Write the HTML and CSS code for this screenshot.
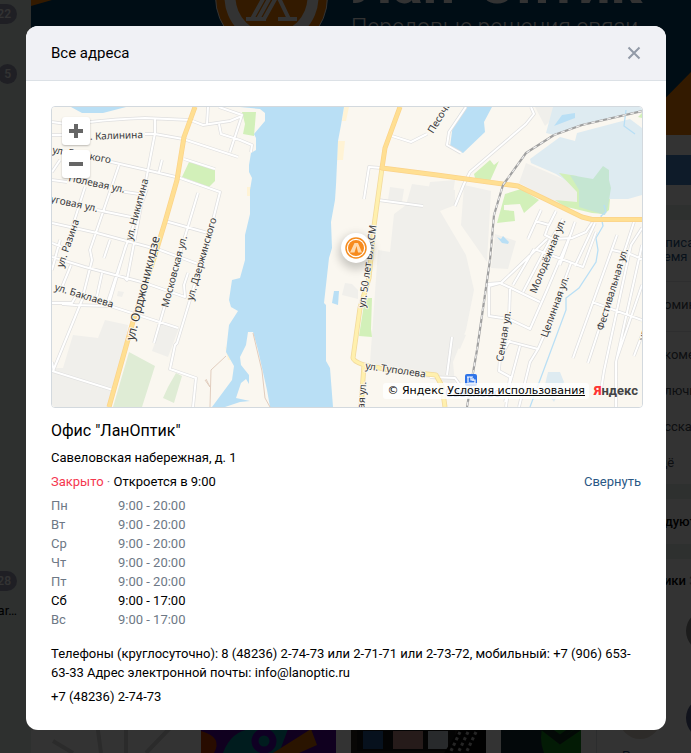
FILE: index.html
```html
<!DOCTYPE html>
<html lang="ru">
<head>
<meta charset="utf-8">
<meta name="viewport" content="width=device-width, initial-scale=1">
<title>Все адреса</title>
<link rel="stylesheet" href="styles.css">
</head>
<body>
<div class="page" aria-hidden="true">
  <nav class="rail">
    <span class="badge">22</span>
    <span class="badge badge-next">5</span>
    <span class="badge badge-low">28</span>
    <span class="rail-name">ar…</span>
  </nav>
  <div class="main">
    <svg class="cover" viewBox="31 0 660 135" preserveAspectRatio="xMinYMin slice">
      <rect x="31" width="660" height="135" fill="#00406a"/>
      <path d="M31 0H52L31 6Z" fill="#ff8200"/>
      <path d="M691 72V135H629Z" fill="#ff8200"/>
      <circle cx="271.5" cy="-3" r="56" fill="#ff8200" stroke="#fff"/>
      <circle cx="271.5" cy="-3" r="47" fill="#fff"/>
      <circle cx="271.5" cy="-3" r="36" fill="#ff8200"/>
      <path d="M246 19H266M252 19L268-10M258 19L274-10M264 19L278-6M276-8L289 19M278 19H297" fill="none" stroke="#fff" stroke-width="4"/>
      <text class="cover-name" x="352" y="3">Лан-Оптик</text>
      <text class="cover-line" x="351" y="35">Передовые решения связи</text>
    </svg>
    <div class="columns">
      <div class="wall">
        <div class="goods">
          <svg viewBox="0 0 135 120"><rect width="135" height="120" fill="#fff"/><path d="M2 108L22 120M46 90L50 120M75 90V120M120 94L95 120" stroke="#d5d5d5" stroke-width="4"/></svg>
          <svg viewBox="0 0 135 120"><rect width="135" height="120" fill="#50009b"/><path d="M0 98Q22 104 13 120H0Z" fill="#c83c00"/><path d="M22 120Q30 98 50 96H87L78 120Z" fill="#008c96"/><circle cx="63" cy="108" r="9" fill="none" stroke="#4c00b0" stroke-width="7"/><path d="M72 120L110 96L116 112L98 120Z" fill="#d26400"/></svg>
          <svg viewBox="0 0 135 120"><rect width="135" height="120" fill="#292321"/><path d="M6 90H104V118H6Z" fill="#151515"/><path d="M12 98H32V116H12Z" fill="#235491"/><path d="M42 98H72V116H42Z" fill="#bd8580"/><path d="M77 98H97V116H77Z" fill="#c8d2dc"/><path d="M93 120L108 96H135V120Z" fill="#090909"/><path d="M109 99L99 120M117 99L107 120M125 99L115 120" stroke="#bbb" stroke-width="3" stroke-dasharray="3 3"/></svg>
          <svg class="short" viewBox="0 0 80 120"><rect width="80" height="120" fill="#132b33"/><circle cx="78" cy="105" r="38" fill="#13891a"/><path d="M42 96L59 109L78 96M38 89L59 104L80 89" fill="none" stroke="#102d22" stroke-width="4"/></svg>
        </div>
      </div>
      <aside class="side">
        <div class="card card-follow"><div class="follow"></div></div>
        <div class="card card-actions">
          <p class="action write">Написать<br>время о</p>
          <p class="action ruled">Упоминания</p>
          <p class="action ruled">Рекомендовать</p>
          <p class="action">Включить</p>
          <p class="action">Рассказать</p>
          <p class="action">Ещё</p>
        </div>
        <div class="card card-head">Рекомендуют</div>
        <div class="card card-people">
          <div class="people-title">Подписчики <span>3</span></div>
          <div class="faces"><i></i><i></i></div>
          <div class="faces"><i class="face-light"></i><i class="face-blue"></i></div>
          <div class="person">Роман</div>
        </div>
      </aside>
    </div>
  </div>
</div>

<div class="overlay">
  <section class="dialog" role="dialog" aria-labelledby="dialog-title">
    <header class="dialog-head">
      <h1 id="dialog-title">Все адреса</h1>
      <button class="close" type="button" aria-label="Закрыть">
        <svg viewBox="0 0 14 14"><path d="M1.5 1.5L12.5 12.5M12.5 1.5L1.5 12.5" fill="none" stroke="#929aa7" stroke-width="2"/></svg>
      </button>
    </header>
    <div class="dialog-body">
      <div class="map">
        <svg class="map-view" viewBox="52 107 590 300" preserveAspectRatio="xMidYMid slice">
          <defs>
            <filter id="soft" x="-50%" y="-50%" width="200%" height="200%"><feGaussianBlur stdDeviation="5"/></filter>
            <g id="streets">
              <path d="M52 122L66 124M90 122Q115 119 145 118L190 120L203 125L230 121L242 116M208 107L207 124M219 107L242 115L230 152M219 124L221 134L240 140L252 145L251 152M52 135H62M155 118V133L127 280L125 278M145 134H155L183 139L238 157M107 161L155 172L180 178L220 192L208 240L177 343L175 345L170 369L196 378L193 407M162 160L159 172M184 159L215 169M119 165L90 250L92 260L82 300L53 371M60 160L52 172M52 180L67 182M119 191L139 194M97 210L131 217M165 221L208 233M198 193L178 260L154 343M147 189L127 243L107 304M85 187L72 228M60 240L52 270M52 223L97 233L160 250L198 264M52 243L62 247M52 257L85 267L145 283L185 297L184 285L188 273M110 240L104 258M126 245L110 300M71 265L62 287M102 273L97 296M62 304L75 305L110 306L178 328M52 303H72L76 296M52 371L113 390M52 362L54 372"/>
              <path d="M392 136L411 142L427 134M382 168L369 167L364 199M378 200L423 206M466 107L449 132L447 145L461 153M531 107L534 114L526 124L470 172L464 184L455 206M541 210L528 239M535 221L549 225L556 211M549 224L545 235L553 239L572 238L586 232L592 223M563 219L552 238M575 222L560 265M595 223L575 266M501 283L520 265L547 239M487 284L500 283L511 288L540 302M500 283L489 286V316L509 319L530 329L547 290L572 231M510 289L509 319M510 340L500 358L499 371L510 377L506 407M507 341L538 349L545 333L571 263M520 346L505 402M538 349L530 362L519 407M537 250L583 267L596 232M523 292L550 240M534 249L513 285M452 337L447 375M430 377L455 378L460 385M617 235L573 358M612 250L630 254L642 259M634 222L588 363M642 228L631 245L604 371L601 390M592 302L642 320M642 245L616 362V407M642 285L617 358M642 335L634 356"/>
            </g>
          </defs>
          <rect x="52" y="107" width="590" height="300" fill="#faf7f0"/>

          <g fill="#f0efeb">
            <path d="M105 320L128 325L125 350L108 407H52V368H63L73 335L98 338Z"/>
            <path d="M162 323L179 328L168 357L152 351Z"/>
            <path d="M118 291L124 292L122 297L117 296Z"/>
            <path d="M390 187L404 189L402 202L388 200Z"/>
            <path d="M412 184L455 190V205L440 211L466 255L474 290L466 330L453 362L455 385L370 363L378 250L390 252L394 214L406 205Z"/>
            <path d="M430 182L455 180L451 207L424 209ZM464 185L491 191L487 262L461 225Z"/>
            <path d="M345 283L352 284L358 290V299L342 295Z"/>
            <path d="M526 163L577 185V202L565 207L519 183Z"/>
            <path d="M495 234L516 241L508 269L491 268Z"/>
            <path d="M535 107H565L545 126ZM460 333L466 335L460 349L455 347Z"/>
          </g>
          <g fill="#d2f0b9">
            <path d="M189 162L215 168V181L209 187L182 177Z"/>
            <path d="M242 112H256L254 136L243 134L245 124Z"/>
            <path d="M365 298H372L371 329L372 337L359 336Z"/>
            <path d="M474 174L490 160L494 165L499 161L490 181L475 178Z"/>
            <path d="M505 194L521 189L539 200L524 213L520 204L504 205V210L514 211L515 221L497 223Z"/>
            <path d="M642 113V118L638 117Z"/>
          </g>
          <path d="M129 352L155 366L142 407H113ZM176 373L182 376L174 403L163 398L168 387Z" fill="#dfecd5"/>
          <path d="M553 107H642V111L582 125L554 135L546 133Z" fill="#deebf1"/>
          <path d="M530 159L560 137L575 141L577 133L630 119L642 128V195L628 199H608L580 190L556 174L531 163Z" fill="#deebf1"/>
          <path d="M559 173L577 176L582 205L567 208L555 200L577 202V192ZM567 207L610 199L609 210L604 214L592 213Z" fill="#d2f0b9"/>
          <path d="M570 175L593 179L603 166L609 170V180L611 188L608 206L605 215L579 207V190Z" fill="#c5e6d2"/>
          <path d="M548 372H560L564 382L554 402L544 389Z" fill="#deebf1"/>
          <g fill="#fff3d5">
            <path d="M344 107H349L346 121H342ZM338 141H345L343 160H337ZM247 187H251V196H247ZM225 346L233 360H228Z"/>
          </g>
          <g fill="#b9dff5">
            <path d="M71 107L82 113H103L126 107Z"/>
            <path d="M240 107H344L341 125L338 141L336 185L335 200L331 222L332 248L329 258L324 303L326 305V361L330 368L333 407H270L267 390L258 350L253 332H248L246 345L240 357L241 365L249 375V384L246 379L241 383L236 398L250 401L240 402L225 407H212L232 380L234 366L226 352L229 325L238 311L231 307L229 300L232 280L240 278L245 260V235L250 214V190L252 178L249 172V165L251 153L256 150V138L254 134L265 121L265 113L260 109Z"/>
            <path d="M334 291H339L338 305L332 303Z"/>
            <path d="M464 107H492L484 122L485 132L463 153L450 147L453 124Z"/>
            <path d="M562 115L575 113V118L554 126ZM497 237L501 239L503 236L509 242L508 244L502 243Z"/>
          </g>
          <g fill="none" stroke="#b9dff5" stroke-width="1.3">
            <path d="M604 205L606 212L601 216L603 226L596 238L598 250L596 262L579 288L566 298V310L530 407M626 110L624 126L635 134"/>
          </g>
          <path d="M253 333L262 371L265 398L270 407M226 356L211 370L210 407M205 380L210 387L206 379" fill="none" stroke="#e1cdbe"/>

          <g fill="none" stroke-linejoin="round">
            <use href="#streets" stroke="#dfdfdf" stroke-width="3.4"/>
            <use href="#streets" stroke="#fff" stroke-width="2"/>
            <path d="M382 168L374 226L369 278L360 308L353 358Q353 361 364 365L361 407M364 365L390 370L436 375L442 386L445 407" stroke="#f2da9d" stroke-width="5"/>
            <path d="M382 168L374 226L369 278L360 308L353 358Q353 361 364 365L361 407M364 365L390 370L436 375L442 386L445 407" stroke="#fff0ae" stroke-width="3.4"/>
            <path d="M195 107L184 137L177 180L165 222L155 255L134 318L125 350L109 407M400 107L385 148L382 168L437 175L518 186L545 199L582 217L592 219.5H642" stroke="#fbd38a" stroke-width="5"/>
            <path d="M195 107L184 137L177 180L165 222L155 255L134 318L125 350L109 407M400 107L385 148L382 168L437 175L518 186L545 199L582 217L592 219.5H642" stroke="#ffdf92" stroke-width="3.6"/>
            <path d="M642 111L582 125L554 135L526 153L503 185L494 215L490 260L477 350L467 407" stroke="#a0a0a0" stroke-width="2.2"/>
            <path d="M642 111L582 125L554 135L526 153L503 185L494 215L490 260L477 350L467 407" stroke="#eee" stroke-width="1.2" stroke-dasharray="4 4"/>
          </g>

          <g class="street">
            <text transform="translate(143 138) rotate(-2)" text-anchor="end">ул. Калинина</text>
            <text transform="translate(52 153) rotate(10)">ул. Горького</text>
            <text transform="translate(68 181) rotate(12)">Полевая ул.</text>
            <text transform="translate(97 212) rotate(12)" text-anchor="end">Луговая ул.</text>
            <text transform="translate(132 241) rotate(-75)">ул. Никитина</text>
            <text transform="translate(63 268) rotate(-71)">ул. Разина</text>
            <text transform="translate(168 308) rotate(-75)">Московская ул.</text>
            <text transform="translate(193 301) rotate(-74)">ул. Дзержинского</text>
            <text transform="translate(54 290) rotate(17)">ул. Баклаева</text>
            <text transform="translate(433 134) rotate(-58)">Песочная</text>
            <text transform="translate(536 294) rotate(-68)">Молодёжная ул.</text>
            <text transform="translate(547 338) rotate(-70)">Целинная ул.</text>
            <text transform="translate(503 362) rotate(-81)">Сенная ул.</text>
            <text transform="translate(603 331) rotate(-73)">Фестивальная ул.</text>
            <text transform="translate(645 341) rotate(-75)">ул. Мира</text>
            <text transform="translate(364 414) rotate(-86)">кая ул.</text>
            <text transform="translate(365 308) rotate(-82)">ул. 50 лет ВЛКСМ</text>
            <text transform="translate(365 369) rotate(8)">ул. Туполева</text>
            <text class="street-big" transform="translate(134 341) rotate(-76)">ул. Орджоникидзе</text>
            <text class="station" x="445" y="397">Савёлово</text>
          </g>
          <rect x="465" y="374" width="12" height="12" rx="2" fill="#2f74e8"/>
          <path d="M467 377H473M468 377V382M471 377V380H475V383H467M473 378V381" fill="none" stroke="#fff" stroke-width="1.2"/>

          <circle cx="356" cy="252" r="17" fill="#000" opacity=".2" filter="url(#soft)"/>
          <circle cx="356" cy="248" r="15" fill="#fff"/>
          <circle cx="356" cy="248" r="10" fill="#fff" stroke="#f58c1f" stroke-width="1.5"/>
          <circle cx="356" cy="248" r="8" fill="#f78b1e"/>
          <path d="M350 252.5L354.5 243H358L362 252.5H358L356.5 246L354.5 252.5Z" fill="#ffd9ac"/>
        </svg>
        <div class="zoom">
          <button type="button" aria-label="Приблизить"><svg viewBox="0 0 14 14"><path d="M5 0H9V5H14V9H9V14H5V9H0V5H5Z" fill="#666"/></svg></button>
          <button type="button" aria-label="Отдалить"><svg viewBox="0 0 14 14"><path d="M0 5H14V9H0Z" fill="#666"/></svg></button>
        </div>
        <div class="credits">
          <span class="terms">© Яндекс <a href="#terms">Условия использования</a></span>
          <a class="yandex" href="#yandex"><b>Я</b>ндекс</a>
        </div>
      </div>

      <h2>Офис "ЛанОптик"</h2>
      <p class="address">Савеловская набережная, д. 1</p>
      <div class="status">
        <p><span class="closed">Закрыто</span> <span class="dot">·</span> Откроется в 9:00</p>
        <button class="toggle" type="button">Свернуть</button>
      </div>
      <table class="hours">
        <tbody>
          <tr><th scope="row">Пн</th><td>9:00 - 20:00</td></tr>
          <tr><th scope="row">Вт</th><td>9:00 - 20:00</td></tr>
          <tr><th scope="row">Ср</th><td>9:00 - 20:00</td></tr>
          <tr><th scope="row">Чт</th><td>9:00 - 20:00</td></tr>
          <tr><th scope="row">Пт</th><td>9:00 - 20:00</td></tr>
          <tr class="today"><th scope="row">Сб</th><td>9:00 - 17:00</td></tr>
          <tr><th scope="row">Вс</th><td>9:00 - 17:00</td></tr>
        </tbody>
      </table>
      <p class="contacts">Телефоны (круглосуточно): 8 (48236) 2-74-73 или 2-71-71 или 2-73-72, мобильный: +7 (906) 653-63-33 Адрес электронной почты: info@lanoptic.ru</p>
      <p class="phone">+7 (48236) 2-74-73</p>
    </div>
  </section>
</div>
</body>
</html>
```
FILE: styles.css
```css
* { box-sizing: border-box; }

body {
  margin: 0;
  font: 13px/19px Roboto, sans-serif;
  color: #000;
  background: #edeef0;
}

h1, h2, p { margin: 0; font-weight: 400; }

button { padding: 0; border: 0; background: none; font: inherit; cursor: pointer; }

svg { display: block; }

/* Community page under the dialog */
.page {
  display: grid;
  grid-template-columns: 31px 1fr;
  height: 100vh;
  overflow: hidden;
  background: #e3eeea;
}

.rail {
  display: flex;
  flex-direction: column;
  align-items: flex-end;
  padding: 4px 14px 0 0;
}

.badge {
  padding: 0 6px;
  border-radius: 10px;
  background: #9a9db4;
  color: #fff;
  font-size: 12px;
  font-weight: 500;
  line-height: 20px;
}

.badge-next { margin-top: 40px; }
.badge-low { margin-top: 487px; }
.rail-name { margin-top: 10px; }

.main { display: flex; flex-direction: column; min-width: 0; min-height: 0; }
.cover { flex: none; width: 100%; height: 135px; }
.cover-name { font: 700 57px Roboto, sans-serif; fill: #fff; }
.cover-line { font: 300 23px Roboto, sans-serif; fill: #fff; }

.columns { display: flex; flex: 1; min-height: 0; background: #fff; }

.wall { display: flex; flex: 1; align-items: flex-end; min-width: 0; padding: 0 15px 0 20px; }
.goods { display: flex; gap: 15px; width: 100%; overflow: hidden; }
.goods svg { flex: none; width: 135px; height: 120px; }
.goods .short { width: 80px; }

.side { width: 95px; border-left: 1px solid #dce1e6; overflow: hidden; white-space: nowrap; }
.card + .card { border-top: 15px solid #e3eeea; }

.card-follow { padding: 20px 0 20px 15px; }
.follow { height: 30px; border-radius: 4px 0 0 4px; background: #4986cc; }
.card-actions { padding: 16px 0 12px; color: #444b55; }
.action { padding-left: 52px; margin-bottom: 17px; }
.action:last-child { margin-bottom: 0; }
.action.write { line-height: 14px; color: #2a5885; }
.action.ruled { padding-top: 13px; border-top: 1px solid #e4e7ea; }
.card-head { padding: 13px 14px; font-weight: 500; }
.card-people { padding: 12px 14px; }
.people-title { font-weight: 500; }
.people-title span { color: #828a99; }
.faces { display: flex; gap: 25px; margin: 20px 0 45px 8px; }
.faces i { flex: none; width: 42px; height: 42px; border-radius: 50%; background: #8b8b8b; }
.faces .face-light { background: #dfd6cc; }
.faces .face-blue { background: #555e8a; }
.faces + .person { margin-top: -38px; }
.person { padding-left: 11px; color: #2a5885; }

/* Dialog */
.overlay {
  position: fixed;
  inset: 0;
  overflow: auto;
  padding: 26px 25px 23px 26px;
  background: rgba(0, 0, 0, .8);
}

.dialog {
  max-width: 640px;
  margin: 0 auto;
  overflow: hidden;
  border-radius: 12px;
  background: #fff;
}

.dialog-head {
  display: flex;
  align-items: center;
  justify-content: space-between;
  height: 55px;
  padding: 0 25px;
  border-bottom: 1px solid #dce1e6;
  background: #f0f1f5;
}

h1 { font-size: 15px; line-height: 20px; }
.close svg { width: 14px; height: 14px; }
.dialog-body { padding: 25px 25px 24px; }

.map {
  position: relative;
  height: 302px;
  margin-right: -2px;
  overflow: hidden;
  border: 1px solid #d3d9de;
  border-radius: 4px;
}

.map-view { width: 100%; height: 100%; }

.street { font: 10px "Noto Sans", sans-serif; fill: #37373b; stroke: #faf7f0; stroke-width: 2px; stroke-linejoin: round; paint-order: stroke; }
.street-big { font-size: 12px; }
.station { font-size: 12px; fill: #4678d2; }

.zoom { position: absolute; top: 10px; left: 10px; display: grid; gap: 5px; }

.zoom button {
  display: grid;
  place-items: center;
  width: 28px;
  height: 28px;
  border-radius: 3px;
  background: #fff;
  box-shadow: 0 1px 2px rgba(0, 0, 0, .25);
}

.zoom svg { width: 14px; height: 14px; }

.credits {
  position: absolute;
  right: 4px;
  bottom: 7px;
  display: flex;
  align-items: center;
  gap: 5px;
}

.terms {
  padding: 0 4px;
  border-radius: 3px;
  background: rgba(255, 255, 255, .8);
  font: 11px/16px "DejaVu Sans", sans-serif;
}

.terms a { color: #000; }
.yandex { color: #444; font: 700 13px/18px Roboto, sans-serif; text-decoration: none; }
.yandex b { color: #f33; }

h2 { margin-top: 13px; font-size: 16px; line-height: 20px; }
.address { margin-top: 7px; }
.status { display: flex; justify-content: space-between; margin-top: 5px; }
.closed { color: #f5384f; }
.dot { color: #828a99; }
.toggle { color: #2a5885; }

.hours { margin-top: 5px; border-collapse: collapse; color: #6d7885; }
.hours th, .hours td { padding: 0; font-weight: 400; text-align: left; }
.hours th { width: 67px; }
.hours .today { color: #000; }

.contacts { margin-top: 15px; }
.phone { margin-top: 5px; }
```
